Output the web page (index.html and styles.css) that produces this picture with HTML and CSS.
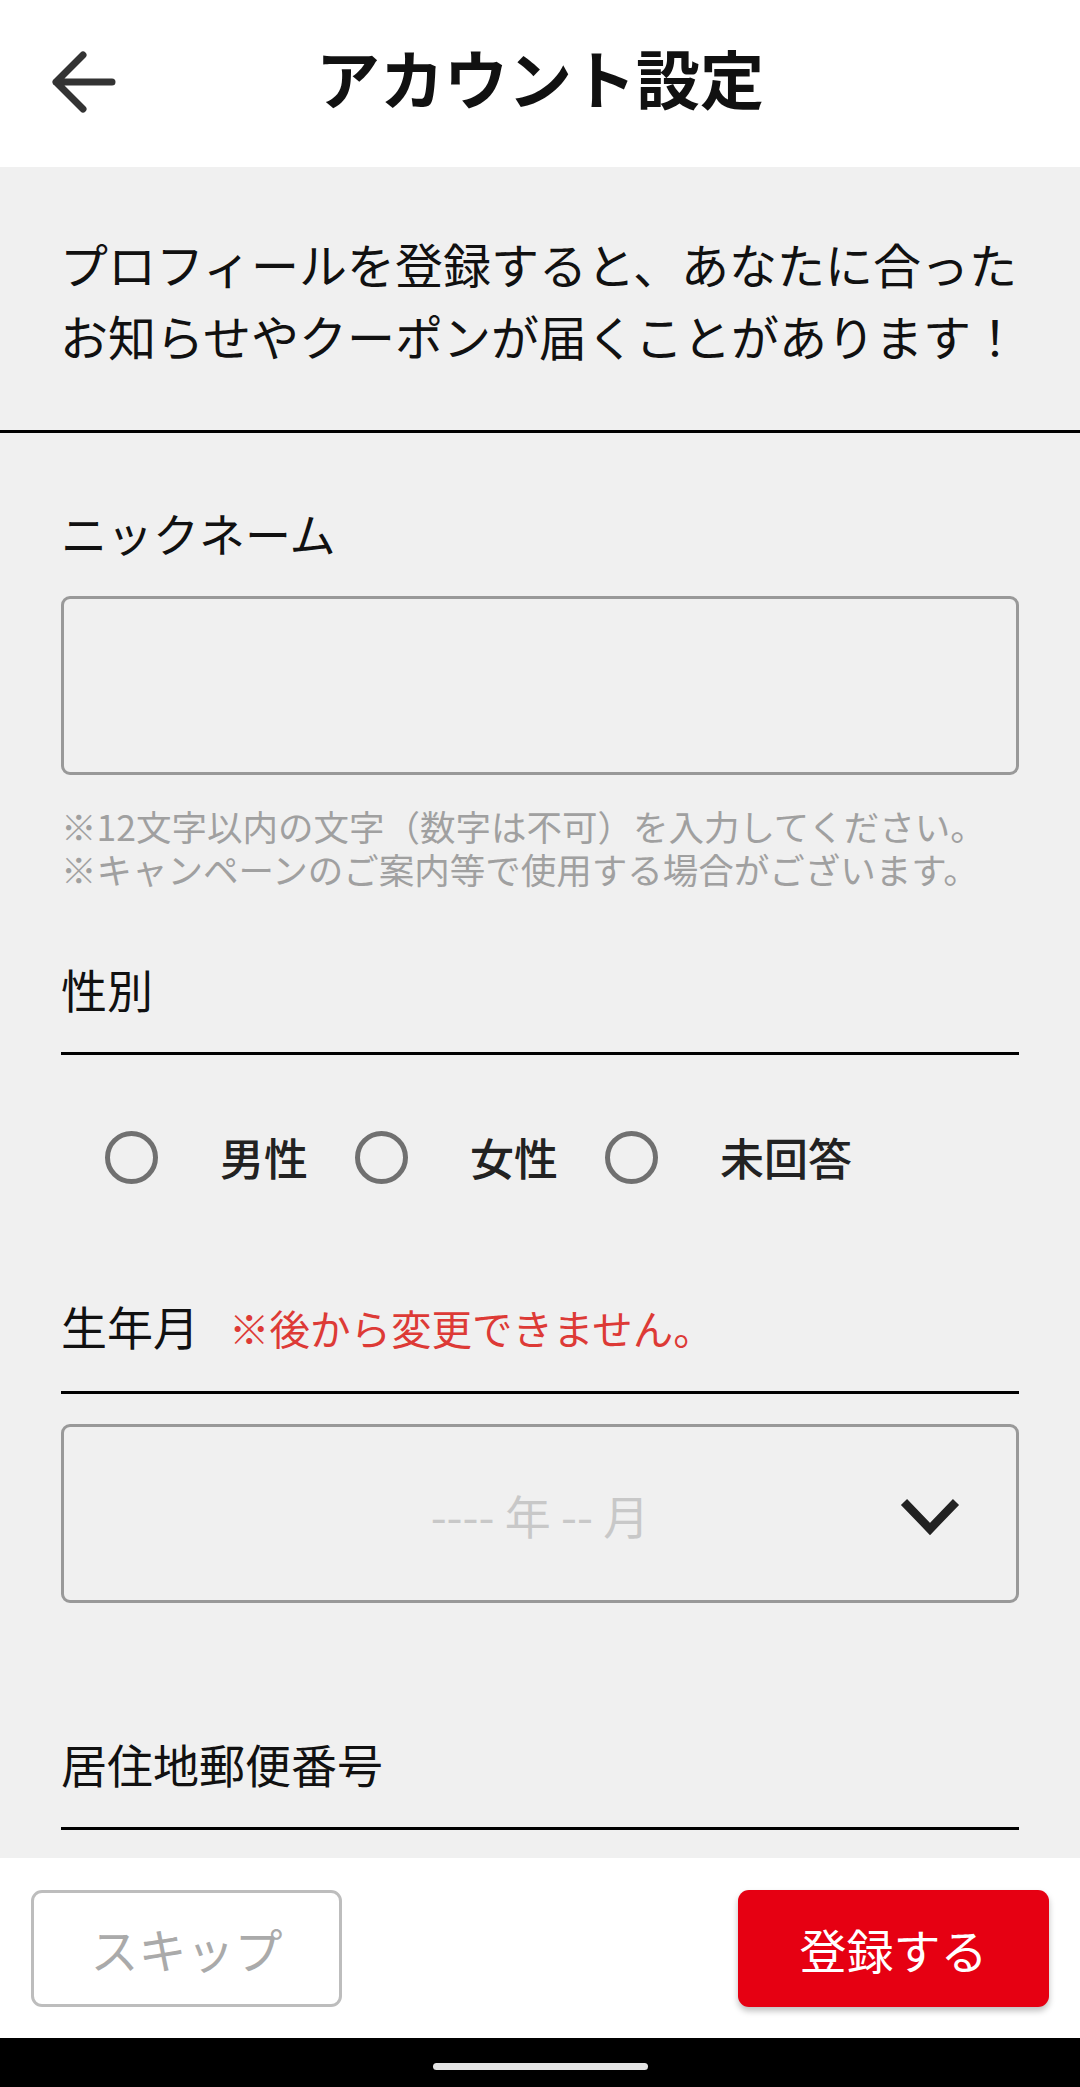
FILE: index.html
```html
<!DOCTYPE html>
<html lang="ja">
<head>
    <meta charset="UTF-8">
    <meta name="viewport" content="width=device-width, initial-scale=1.0">
    <title>アカウント設定</title>
    <link rel="stylesheet" href="styles.css">
</head>
<body>
    <div class="app">
        <header class="topbar">
            <div class="back">
                <svg width="64" height="64" viewBox="0 0 64 64">
                    <path d="M4 32 H60 M31 5 L4 32 L31 59" class="arrow"/>
                </svg>
            </div>
            <h1 class="title">アカウント設定</h1>
            <div></div>
        </header>

        <main class="content">
            <div class="intro">
                <p>プロフィールを登録すると、あなたに合った<br>お知らせやクーポンが届くことがあります！</p>
            </div>

            <div class="form">
                <div class="field">
                    <div class="label">ニックネーム</div>
                    <div class="textbox"></div>
                    <p class="note">※12文字以内の文字（数字は不可）を入力してください。<br>※キャンペーンのご案内等で使用する場合がございます。</p>
                </div>

                <div class="field">
                    <div class="label ruled">性別</div>
                    <div class="radios">
                        <div class="radio"><span class="circle"></span><span>男性</span></div>
                        <div class="radio"><span class="circle"></span><span>女性</span></div>
                        <div class="radio"><span class="circle"></span><span>未回答</span></div>
                    </div>
                </div>

                <div class="field">
                    <div class="label ruled">生年月<span class="warn">※後から変更できません。</span></div>
                    <div class="select">
                        <div></div>
                        <div class="placeholder">---- 年 -- 月</div>
                        <div class="chevron">
                            <svg width="62" height="40" viewBox="0 0 62 40">
                                <polyline points="5,5 31,32 57,5" class="chev"/>
                            </svg>
                        </div>
                    </div>
                </div>

                <div class="field">
                    <div class="label ruled">居住地郵便番号</div>
                </div>
            </div>
        </main>

        <footer class="actions">
            <button class="btn skip">スキップ</button>
            <button class="btn submit">登録する</button>
        </footer>

        <div class="navbar"><span class="handle"></span></div>
    </div>
</body>
</html>
```

FILE: styles.css
```css
*,
*:before,
*:after {
    margin: 0;
    padding: 0;
    box-sizing: border-box;
}

body {
    font-family: "Noto Sans CJK JP", "Noto Sans", sans-serif;
    background-color: #f0f0f0;
    color: #111;
}

.app {
    display: flex;
    flex-direction: column;
    height: 2087px;
    width: 1080px;
}

/* header */
.topbar {
    height: 167px;
    background: #fff;
    display: grid;
    grid-template-columns: 1fr auto 1fr;
    align-items: center;
}

.back {
    padding-left: 52px;
    padding-bottom: 4px;
    display: flex;
}

.arrow {
    fill: none;
    stroke: #333;
    stroke-width: 7;
    stroke-linecap: round;
    stroke-linejoin: round;
}

.title {
    font-size: 64px;
    font-weight: bold;
    color: #111;
    padding-bottom: 16px;
}

/* scroll area */
.content {
    flex: 1;
    overflow: hidden;
}

.intro {
    height: 266px;
    padding: 60px 0 0 60px;
    border-bottom: 3px solid #000;
}

.intro p {
    font-size: 48px;
    line-height: 72px;
}

.form {
    padding: 0 61px;
}

.label {
    font-size: 46px;
    line-height: 69px;
    margin-top: 65px;
}

.label.ruled {
    padding-bottom: 29px;
    border-bottom: 3px solid #000;
}

.warn {
    font-size: 40.5px;
    color: #dd3a36;
    margin-left: 30px;
}

.textbox {
    margin-top: 29px;
    height: 179px;
    border: 3px solid #999;
    border-radius: 9px;
}

.note {
    margin-top: 29px;
    font-size: 35.5px;
    line-height: 43px;
    color: #a0a0a0;
}

.field:nth-child(2) .label {
    margin-top: 64px;
}

.radios {
    display: flex;
    align-items: center;
    margin-top: 70px;
    padding-left: 44px;
    gap: 47px;
}

.radio {
    display: flex;
    align-items: center;
    font-size: 44px;
    font-weight: 500;
    color: #222;
}

.circle {
    width: 53px;
    height: 53px;
    border: 5px solid #707070;
    border-radius: 50%;
    margin-right: 62px;
}

.field:nth-child(3) .label {
    margin-top: 102px;
}

.select {
    margin-top: 30px;
    height: 179px;
    border: 3px solid #999;
    border-radius: 9px;
    display: grid;
    grid-template-columns: 1fr auto 1fr;
    align-items: center;
}

.placeholder {
    font-size: 46px;
    color: #c8c8c8;
}

.chevron {
    display: flex;
    justify-content: flex-end;
    padding-right: 55px;
    padding-top: 6px;
}

.chev {
    fill: none;
    stroke: #222;
    stroke-width: 8.5;
}

.field:nth-child(4) .label {
    margin-top: 126px;
}

/* footer */
.actions {
    height: 180px;
    background: #fff;
    display: flex;
    justify-content: space-between;
    align-items: center;
    padding: 0 31px;
}

.btn {
    width: 311px;
    height: 117px;
    border-radius: 11px;
    font-family: "Noto Sans CJK JP", "Noto Sans", sans-serif;
    font-size: 47px;
    cursor: pointer;
}

.skip {
    background: #fff;
    border: 3px solid #bdbdbd;
    color: #aaa;
    font-size: 48px;
}

.submit {
    background: #e60012;
    border: none;
    color: #fff;
    box-shadow: 0 4px 6px rgba(0, 0, 0, 0.25);
}

.navbar {
    height: 49px;
    background: #000;
    display: flex;
    justify-content: center;
    padding-top: 25px;
}

.handle {
    width: 215px;
    height: 7px;
    border-radius: 4px;
    background: #e4e4e4;
}
```
